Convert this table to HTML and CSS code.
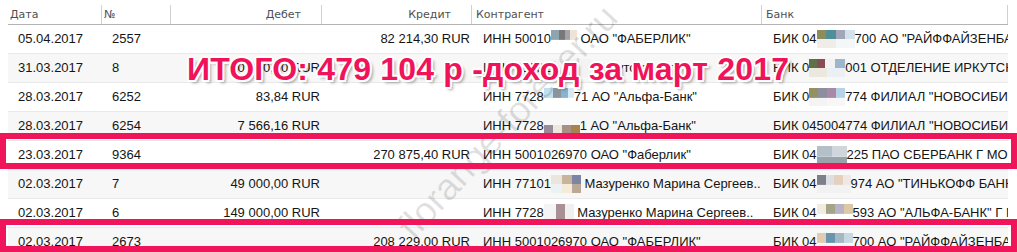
FILE: index.html
```html
<!DOCTYPE html>
<html lang="ru">
<head>
<meta charset="utf-8">
<title>Выписка</title>
<link rel="stylesheet" href="styles.css">
</head>
<body>
<div class="page">
  <div class="table">
    <div class="row head">
      <div class="c">Дата</div>
      <div class="c">№</div>
      <div class="c r">Дебет</div>
      <div class="c r">Кредит</div>
      <div class="c k">Контрагент</div>
      <div class="c k">Банк</div>
    </div>
    <div class="row">
      <div class="c">05.04.2017</div>
      <div class="c">2557</div>
      <div class="c r"></div>
      <div class="c r">82 214,30 RUR</div>
      <div class="c">ИНН 50010<span class="mz mz1"></span> ОАО "ФАБЕРЛИК"</div>
      <div class="c">БИК 04<span class="mz mz2"></span>700 АО "РАЙФФАЙЗЕНБАНК"</div>
    </div>
    <div class="row alt">
      <div class="c">31.03.2017</div>
      <div class="c">8</div>
      <div class="c r">10 990,00 RUR</div>
      <div class="c r"></div>
      <div class="c">ИНН 38082<span class="mz mz3"></span> Иркутскэнерго</div>
      <div class="c">БИК 0<span class="mz mz4"></span>001 ОТДЕЛЕНИЕ ИРКУТСК</div>
    </div>
    <div class="row">
      <div class="c">28.03.2017</div>
      <div class="c">6252</div>
      <div class="c r">83,84 RUR</div>
      <div class="c r"></div>
      <div class="c">ИНН 7728<span class="mz mz5"></span>71 АО "Альфа-Банк"</div>
      <div class="c">БИК 0<span class="mz mz6"></span>774 ФИЛИАЛ "НОВОСИБИРСКИЙ"</div>
    </div>
    <div class="row alt">
      <div class="c">28.03.2017</div>
      <div class="c">6254</div>
      <div class="c r">7 566,16 RUR</div>
      <div class="c r"></div>
      <div class="c">ИНН 7728<span class="mz mz7"></span>1 АО "Альфа-Банк"</div>
      <div class="c">БИК 045004774 ФИЛИАЛ "НОВОСИБИРСКИЙ"</div>
    </div>
    <div class="row">
      <div class="c">23.03.2017</div>
      <div class="c">9364</div>
      <div class="c r"></div>
      <div class="c r">270 875,40 RUR</div>
      <div class="c">ИНН 5001026970 ОАО "Фаберлик"</div>
      <div class="c">БИК 04<span class="mz mz8"></span>225 ПАО СБЕРБАНК Г МОСКВА</div>
    </div>
    <div class="row alt">
      <div class="c">02.03.2017</div>
      <div class="c">7</div>
      <div class="c r">49 000,00 RUR</div>
      <div class="c r"></div>
      <div class="c">ИНН 77101<span class="mz mz9"></span> Мазуренко Марина Сергеев..</div>
      <div class="c">БИК 04<span class="mz mz10"></span>974 АО "ТИНЬКОФФ БАНК"</div>
    </div>
    <div class="row">
      <div class="c">02.03.2017</div>
      <div class="c">6</div>
      <div class="c r">149 000,00 RUR</div>
      <div class="c r"></div>
      <div class="c">ИНН 7728<span class="mz mz11"></span> Мазуренко Марина Сергеев..</div>
      <div class="c">БИК 04<span class="mz mz12"></span>593 АО "АЛЬФА-БАНК" Г МОСКВА</div>
    </div>
    <div class="row alt">
      <div class="c">02.03.2017</div>
      <div class="c">2673</div>
      <div class="c r"></div>
      <div class="c r">208 229,00 RUR</div>
      <div class="c">ИНН 5001026970 ОАО "ФАБЕРЛИК"</div>
      <div class="c">БИК 04<span class="mz mz13"></span>700 АО "РАЙФФАЙЗЕНБАНК"</div>
    </div>
  </div>

  <div class="watermark">florange-forever.ru</div>
  <div class="frame frame-1"></div>
  <div class="frame frame-2"></div>
  <div class="total">ИТОГО: 479 104 р -доход за март 2017</div>
</div>
</body>
</html>
```

FILE: styles.css
```css
html, body {
  margin: 0;
  padding: 0;
  background: #fff;
}

.page {
  position: relative;
  width: 1017px;
  height: 252px;
  overflow: hidden;
  padding-top: 5px;
  box-sizing: border-box;
}

.table {
  margin-left: 8px;
  width: 1000px;
  font-family: "Liberation Sans", Arial, sans-serif;
  font-size: 13px;
  color: #151515;
}

.row {
  display: grid;
  grid-template-columns: 94px 69px 151px 150px 290px 246px;
  height: 29px;
  box-sizing: border-box;
  border-bottom: 1px solid #e9e9e9;
  align-items: center;
}

.row.alt {
  background: #f7f7f7;
}

.row .c {
  padding: 0 3px 0 10px;
  white-space: nowrap;
  overflow: hidden;
  line-height: 28px;
}

.row .c.r {
  text-align: right;
  padding: 0 2px 0 0;
}

.row .c:nth-child(5),
.row .c:nth-child(6) {
  padding-left: 11px;
}

.row.head {
  height: 20px;
  border-bottom: 1px solid #b4b4b4;
  background: #fff;
  font-family: "DejaVu Sans", Verdana, sans-serif;
  font-size: 11px;
  color: #505050;
  align-items: stretch;
}

.row.head .c {
  line-height: 19px;
  padding: 0 0 0 2px;
  border-right: 1px solid #d2d2d2;
}

.row.head .c.r {
  padding: 0 20px 0 0;
}

.row.head .c.k {
  padding-left: 4px;
}

.mz {
  display: inline-block;
  width: 30px;
  height: 18px;
  vertical-align: -5px;
}

.mz1 { width: 26px; background: linear-gradient(90deg, #8fa5ae 0 30%, #787878 30% 55%, #a4a4a8 55% 75%, #efe2d6 75%) top/100% 55% no-repeat; }
.mz2 { width: 38px; background: linear-gradient(90deg, #8f8c5c 0 25%, #4f8f99 25% 50%, #a2a6bb 50% 75%, #d5e1ea 75%) top/100% 50% no-repeat, linear-gradient(90deg, #f0ede8 0 50%, #f4f7f8 50%) bottom/100% 50% no-repeat; }
.mz3 { width: 40px; background: linear-gradient(90deg, #f3f3f3 0 100%); }
.mz4 { width: 36px; background: linear-gradient(90deg, #5d7048 0 22%, #8a4c54 22% 44%, #f2f2f2 44% 72%, #9db6cc 72%) top/100% 50% no-repeat, linear-gradient(90deg, #ece8de 0 50%, #eaf0f4 50%) bottom/100% 50% no-repeat; }
.mz5 { width: 30px; background: linear-gradient(90deg, #bfe0ee 0 30%, #8a949a 30% 55%, #86b4d2 55% 80%, #d6e9f2 80%) top/100% 55% no-repeat; }
.mz6 { width: 36px; background: linear-gradient(90deg, #949060 0 25%, #8c8ea0 25% 50%, #a88aa8 50% 75%, #b6d2e6 75%) top/100% 55% no-repeat, linear-gradient(90deg, #f4f4f4 0 50%, #f7f7f7 50%) bottom/100% 45% no-repeat; }
.mz7 { width: 36px; background: linear-gradient(90deg, #9a8a98 0 25%, #ece8e0 25% 50%, #a89088 50% 75%, #a8844c 75%) bottom/100% 55% no-repeat; }
.mz8 { width: 30px; background: linear-gradient(90deg, #b4c0c8 0 50%, #d0d6dc 50%) top/100% 60% no-repeat, linear-gradient(90deg, #98a4ac 0 100%) bottom/100% 40% no-repeat; }
.mz9 { width: 30px; background: linear-gradient(90deg, #eae6df 0 35%, #c8b49c 35% 70%, #7c86a4 70%) top/100% 50% no-repeat, linear-gradient(90deg, #eaf2f4 0 35%, #f4ecd8 35% 70%, #bca896 70%) bottom/100% 50% no-repeat; }
.mz10 { width: 34px; background: linear-gradient(90deg, #7c8088 0 25%, #dedee6 25% 50%, #e4d0bc 50% 75%, #f0e8e4 75%) top/100% 55% no-repeat, linear-gradient(90deg, #f2f2f2 0 100%) bottom/100% 45% no-repeat; }
.mz11 { width: 30px; background: linear-gradient(90deg, #f4f4f4 0 40%, #a89094 40% 70%, #f0f0f0 70%) top/100% 100% no-repeat; }
.mz12 { width: 36px; background: linear-gradient(90deg, #f0ece0 0 25%, #a4a488 25% 50%, #b8b4c8 50% 75%, #dcc8a4 75%) top/100% 55% no-repeat; }
.mz13 { width: 36px; background: linear-gradient(90deg, #e2cbb4 0 25%, #6894ac 25% 50%, #a4b8c4 50% 75%, #c8d8e0 75%) top/100% 55% no-repeat; }

.watermark {
  position: absolute;
  left: 348px;
  top: 102px;
  width: 320px;
  text-align: center;
  font-family: "Liberation Sans", Arial, sans-serif;
  font-size: 37px;
  line-height: 40px;
  color: rgba(0, 0, 0, 0.12);
  transform: rotate(-47deg);
  white-space: nowrap;
}

.frame {
  position: absolute;
  left: 0;
  width: 1017px;
  box-sizing: border-box;
  border: 6px solid #f0145a;
}

.frame-1 {
  top: 133px;
  height: 36px;
}

.frame-2 {
  top: 219px;
  height: 33px;
}

.total {
  position: absolute;
  left: 187px;
  top: 53px;
  font-family: "Liberation Sans", Arial, sans-serif;
  font-weight: bold;
  font-size: 32px;
  letter-spacing: 0.2px;
  line-height: 32px;
  color: #f0135a;
  white-space: nowrap;
  text-shadow:
    2px 0 0 #fff, -2px 0 0 #fff, 0 2px 0 #fff, 0 -2px 0 #fff,
    1.5px 1.5px 0 #fff, -1.5px 1.5px 0 #fff, 1.5px -1.5px 0 #fff, -1.5px -1.5px 0 #fff,
    3px 3px 3px rgba(0, 0, 0, 0.35);
}
```
